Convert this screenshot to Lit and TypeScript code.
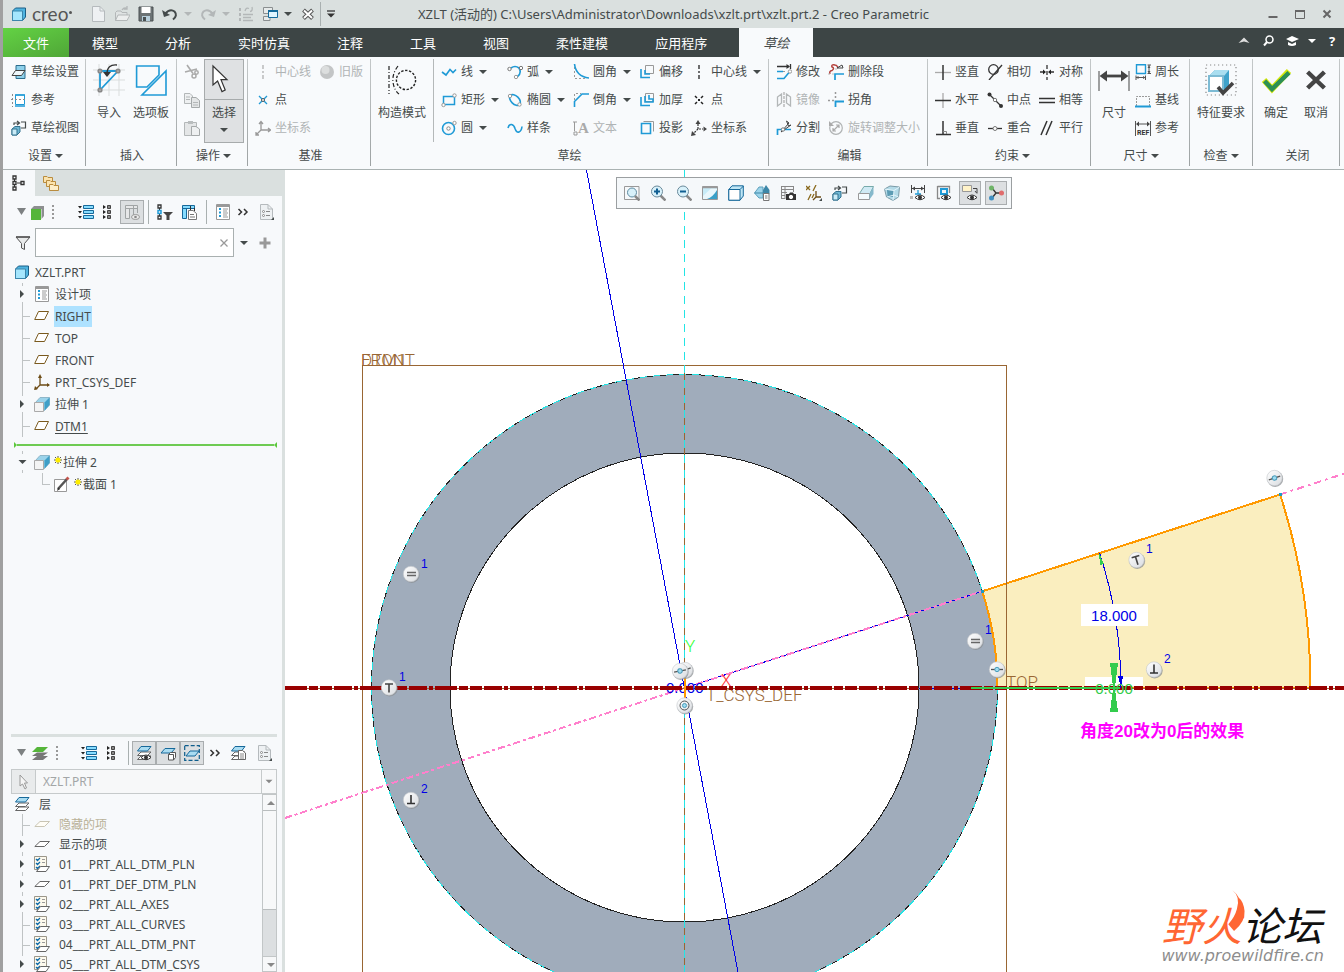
import { LitElement, html, svg, css, nothing } from "lit";
import { customElement, state } from "lit/decorators.js";

const B = "#1f9ad6";
const D = "#454b4b";
const G = "#b3b7b8";
const N = "#17699a";

const line = (d: string, c = D, w = 1, dash = "") =>
  svg`<path d=${d} fill="none" stroke=${c} stroke-width=${w} stroke-dasharray=${dash || "none"}/>`;
const fill = (d: string, c = D, s = "none") => svg`<path d=${d} fill=${c} stroke=${s}/>`;
const node = (x: number, y: number, c = "#777", r = 1.7) =>
  svg`<circle cx=${x} cy=${y} r=${r} fill="#fff" stroke=${c}/>`;

const plane = (c: string, f = "#fff") => fill("M4.500 3.500H14.500L10.500 11.500H.7z", f, c);
const flat = (c: string, f = "#fff") => fill("M6 5.500H15.500L10.500 10.500H.8z", f, c);
const extrude = svg`${fill("M1.500 6.500L6 1.500H15.500V9L10.500 14.500z", "#9bd3ea", "#8fb7c9")}
  ${fill("M10.500 6.500L15.500 1.500V9L10.500 14.500z", "#3f9fc7")}${fill("M.5 6.500H9.500V15.500H.5z", "#f4f4f4", "#aaa")}`;
const partCube = svg`${fill("M1.500 5L4.500 2H14.500V11L11.500 14.500H1.500z", "#4fb4e0", "#1b5f86")}
  ${fill("M1.500 5H11.500V14.500H1.500z", "#a5e6fd", "#3c86ac")}`;
const page = svg`${fill("M2.500 .5H10L14.500 5V15.500H2.500z", "#eef1f3", "#b5babd")}${line("M10 .5V5H14.500", "#b5babd")}`;
const detailPage = svg`${page}${node(5.500, 7.500, "#888", 1)}${node(5.500, 11.500, "#888", 1)}${line("M8 7.500H12M8 11.500H12", "#888")}${fill("M16 13V16H13z")}`;
const listBars = svg`${fill("M5.500 1.500H15.500V4.500H5.500zM5.500 6.500H15.500V9.500H5.500zM5.500 11.500H15.500V14.500H5.500z", "#86dcff", N)}
  ${fill("M0 2H4L2 4.500zM0 7H4L2 9.500zM0 12H4L2 14.500z", "#222")}`;
const smallBars = svg`${fill("M8.500 1.500H11.500V4.500H8.500zM8.500 6.500H11.500V9.500H8.500zM8.500 11.500H11.500V14.500H8.500z", "#888", "#444")}
  ${fill("M4 1L7 3L4 5zM4 6L7 8L4 10zM4 11L7 13L4 15z", "#222")}`;
const sheet = svg`${fill("M1.500 .5H14.500V15.500H1.500z", "#fff", "#999")}${line("M1 2H15", "#999", 2)}
  ${line("M4 5H6M4 8.500H6M4 12H6", B, 2)}${line("M8 5H13M8 7H12M8 9H13M8 11H12M8 13H13", "#999")}`;
const lens = svg`${line("M10.500 10.500L15.500 15.500", "#888", 2.5)}<circle cx="7" cy="6.500" r="5.500" fill="#d8f1fa" stroke="#6b8a9a"/>`;
const eye = svg`<path d="M5 12.500Q10 7.500 15 12.500Q10 17 5 12.500z" fill="#fff" stroke="#333"/><circle cx="10" cy="12.500" r="2" fill="#333"/>`;
const layers = (c1: string, c2: string) => svg`${fill("M1.500 14.500L5 11H15L11.500 14.500z", "#fff", c2)}
  ${fill("M1.500 10.500L5 7H15L11.500 10.500z", "#fff", c2)}${fill("M1.500 6L5 1.500H15L11.500 6z", c1, N)}`;
const checkSheet = svg`${fill("M.5 .5H12.500V13.500H.5z", "#fdf9ec", "#9a968a")}${line("M2 3L3.500 4.500L6 2M2 7L3.500 8.500L6 6M2 11L3.500 12.500L6 10", "#0d6aa8", 1.300)}
  ${line("M8 3.500H11M8 6.500H11", "#999")}${fill("M6.500 10.500H15.500L12 15.500H2.500z", "#fff", "#666")}`;
const caretGlyph = svg`${fill("M4 6H12L8 10z")}`;
const camSwap = svg`${fill("M1 9L4 6.500H9V12L6 15H1z", "#6fb7d4", "#33728f")}${fill("M1 9H6V15H1z", "#c9ebf7", "#33728f")}
  ${line("M3 5V3H8M6 1L8.500 3L6 5M10 2H14.500V8H10", D, 1.200)}`;

const ICONS: Record<string, unknown> = {
  app: partCube,
  partCube,
  new: page,
  open: svg`${fill("M1.500 14.500V6.500L3 5H7L8 6.500H13V14.500z", "#dfe3e3", G)}${fill("M4 9H16L13 14.500H1.500z", "#eceeee", G)}${line("M8 4Q10 1 13 2.500M13 0V3H10", G, 1.300)}`,
  save: svg`${fill("M1 1H15V15H1z", "#6c7375", "#4a5052")}${fill("M3.500 1H12.500V7H3.500z", "#fff")}${fill("M4 10H12V15H4z", "#b7cfdc")}${fill("M5 11H8V15H5z", "#4a5052")}`,
  undo: svg`${line("M3 8Q8 2 12.500 5.500Q16 9.500 11 13.500", D, 2)}${fill("M0 4L2 11L8 9z")}`,
  redo: svg`${line("M13 8Q8 2 3.500 5.500Q0 9.500 5 13.500", G, 2)}${fill("M16 4L14 11L8 9z", G)}`,
  regen: svg`${line("M1 3.500H3M1 8.500H3M1 13.500H3", G, 3)}${line("M5 8.500H15M5 11.500H13M5 14.500H15M7 5Q8 1 11 2.500M14 1Q15 5 12 5.500", G, 1.300)}`,
  windows: svg`${fill("M1.500 1.500H10.500V7.500H1.500z", "#e6eaea", "#8a8f90")}${fill("M1.500 10.500H8V14.500H1.500z", "#e6eaea", "#8a8f90")}${fill("M6.500 4.500H15.500V11.500H6.500z", "#dff5ff", "#136a9b")}${line("M6 5H16", "#136a9b", 2)}`,
  closeDoc: svg`${line("M3.500 4L12.500 12.500M12.500 4L3.500 12.500", "#555", 4)}${line("M4 4.500L12 12M12 4.500L4 12", "#fff", 2)}`,
  caret: caretGlyph,
  caretLight: svg`${fill("M4 6H12L8 10z", G)}`,
  caretBar: svg`${line("M4 5H12", "#333", 1.300)}${fill("M4 7.500H12L8 11.500z", "#333")}`,
  setup: svg`${fill("M5 1.500H14V14.500H5z", "#8ed0ea", "#2d6d8d")}${fill("M1 11.500L4.500 6.500H14L10.500 11.500z", "#eef7fb", "#444")}`,
  refs: svg`${fill("M4.500 3H13.500V12.500H4.500z", "#fff", B)}${line("M4 3H14M4 14H14", B, 1.600)}${line("M1.500 2V15M0 7.500H16", "#8a8a8a", 1, "2 2")}`,
  sketchView: camSwap,
  import: svg`${line("M3 0V16M8 0V16M13 0V16M0 3H16M0 8H16M0 13H16", "#dadddd", .5)}${line("M3.500 3.500V13L12.500 3.500z", B, .9)}${node(3.500, 3.500, "#888", .8)}${node(12.500, 3.500, "#888", .8)}${node(3.500, 13, "#888", .8)}${line("M12 .5Q7 0 7 5", "#333", .7)}${fill("M5 4H9L7 6.500z", "#333")}`,
  palette: svg`${line("M.8 1H12V5.500L6 11.500H.8z", B, .8)}${line("M15.500 3.500V15.500H3.500z", B, .8)}`,
  cut: svg`${line("M3 1L9 9.500M13 5L1 8", "#aaa", 1.600)}<circle cx="10" cy="12" r="2" fill="none" stroke="#aaa" stroke-width="1.500"/><circle cx="12.500" cy="8.500" r="1.700" fill="none" stroke="#aaa" stroke-width="1.500"/>`,
  copy: svg`${fill("M.5 1.500H6L8.500 4V11.500H.5z", "#eef0f1", G)}${fill("M7.500 5.500H12L15.500 8.500V15.500H7.500z", "#e4e6e7", "#a5a9aa")}${line("M2 5H6M2 7.500H6M9 10.500H14M9 13H14", G)}`,
  paste: svg`${fill("M.5 2.500H12.500V15.500H.5z", "#e4e6e7", G)}${fill("M4 1H9V4H4z", "#b9bdbe")}${fill("M7.500 6.500H12L15.500 9V15.500H7.500z", "#eef0f1", "#a5a9aa")}`,
  select: svg`<path d="M2.500 1V10.500L4.800 8.500L7 13.800L8.600 13L6.500 7.800H9.500z" fill="#fff" stroke="#333" stroke-width=".6"/>`,
  clineGrey: line("M8 1V15", "#999", 1, "4 2 2 2"),
  sphere: svg`<circle cx="8" cy="8" r="7" fill="#c3c5c6"/><circle cx="6.500" cy="6" r="4" fill="#dcdede"/>`,
  pointBlue: svg`${line("M4 4L12 12M12 4L4 12", B, 1.300)}<circle cx="8" cy="8" r="1.500" fill="#fff" stroke="#555"/>`,
  csysGrey: svg`${line("M6 2V10H15M6 10L1 15M4 4L6 1.500L8 4M13 8L15.500 10L13 12M1 12V15H4", "#999", 1.300)}`,
  construct: svg`${line("M1.500 1V15", "#222", .6, "2 1 .5 1")}${line("M6 1Q3 5 3.500 9Q4 13 6.500 15", "#222", .6, "2 1 .5 1")}<circle cx="10" cy="8" r="4.800" fill="none" stroke="#222" stroke-width=".7" stroke-dasharray="1.200 .8"/>`,
  line: line("M1 8L5 11L9 5.500L12 8.500L15 5.500", B, 1.600),
  rect: svg`${line("M2.500 4.500H13.500V12.500H2.500z", B, 1.500)}${node(13.500, 3.500, "#999")}${node(2.500, 13, "#999")}`,
  circle: svg`<circle cx="7.500" cy="8.500" r="6" fill="none" stroke=${B} stroke-width="1.600"/>${node(7.500, 8.500, "#888")}${node(13.500, 3, "#999")}`,
  arc: svg`${line("M4 4Q8 1 12 4Q15 9 10.500 12.500", B, 1.600)}${node(2.500, 5)}${node(14, 4)}${node(9, 13, "#999")}`,
  ellipse: svg`<ellipse cx="8" cy="8" rx="6.500" ry="4" transform="rotate(45 8 8)" fill="none" stroke=${B} stroke-width="1.600"/>${node(3, 4, "#999")}${node(12.500, 12.500, "#999")}`,
  spline: line("M1 8Q2 4 4.500 4.500Q7 5 8 8.500Q9.500 13 12 12Q14.500 11 15 6.500", B, 1.600),
  fillet: svg`${line("M1.500 3V14.500H14", "#999", 1, "2 2")}${line("M1.500 0Q3 12.500 16 14", B, 1.600)}`,
  chamfer: svg`${line("M1.500 8V1.500H8", "#999", 1, "2 2")}${line("M1.500 15V9.500L9 2H16", B, 1.600)}`,
  textGrey: svg`${line("M1.500 2V11M0 2H4", "#999")}<text x="5" y="13" font-family="Liberation Serif" font-weight="bold" font-size="15" fill="#aaa">A</text>${line("M1 12H4V15H1z", "#999")}`,
  offset: svg`${line("M6.500 1.500H14.500V9.500H6.500z", "#999")}${line("M2 5V13.500H11M6 6V10H11", B, 1.600)}`,
  thicken: svg`${line("M6.500 1.500H14.500V9.500H6.500z", "#999")}${line("M2 5V13.500H11M6 4V10H14V7H10V3", B, 1.600)}`,
  project: svg`${line("M4.500 1.500H14.500V11.500", "#999")}${line("M2.500 3.500H11.500V13.500H2.500z", B, 1.600)}`,
  clineBlack: line("M8 1V15", "#222", 1.300, "4 2 2 2"),
  pointBlack: svg`${line("M4 4L6 6M10 10L12 12M12 4L10 6M6 10L4 12", "#222", 1.500)}${fill("M7 7H9V9H7z", "#222")}`,
  csysBlack: svg`${line("M7 4V9H12M7 9L2 14", "#333", 1.200, "2 1")}${fill("M7 0L9.500 4H4.500zM16 9L12.500 6.500V11.500zM0 16L1 11L5 15z", "#444")}`,
  modify: svg`${line("M1 2.500H13M14.500 0V5", "#333", 1.300)}${fill("M10.500 0L14 2.500L10.500 5z", "#333")}${line("M1 7.500H9", "#999", 1, "2 1")}${line("M1 7.500H7M1 14.500H8L13 8.500", B, 1.600)}${node(14, 7.500, "#999")}`,
  mirror: svg`${line("M8 0V16", "#999", 1, "3 1")}${line("M1.500 5L5.500 2V11L1.500 14zM14.500 5L10.500 2V11L14.500 14z", G, 1.300)}`,
  divide: svg`${line("M1.500 15V9.500H15", B, 1.700)}${line("M5 12L13 3L10.500 1L12.500 6L15 5z", "#444")}${node(7, 9.500)}`,
  deleteSeg: svg`${line("M2 10Q1 7 4 6.500Q7 4 4 3Q3 0 7 1Q9 1 10 4", "#b5413c", 1.500)}${line("M0 10H6M8 4V8", "#bbb", 1, "2 2")}${line("M7 16V10H16", B, 1.700)}${line("M9 4L14 1L15 4z", "#444")}`,
  corner: svg`${line("M0 8.500H7M7.500 0V8", "#999", 1.500, "2 2")}${line("M7.500 15V9.500H16", B, 1.800)}`,
  rotate: svg`<circle cx="8" cy="8" r="6.300" fill="none" stroke="#b0b3b4" stroke-width="1.200"/>${line("M5 11L11 5M8 5H11V8M5 8V11H8", "#aaa", 1.200)}${fill("M1 1V6H6z", "#aaa")}`,
  vertical: svg`${line("M0 8.500H16", "#aaa", 1.300)}${line("M8 1V16", "#333", 1.500)}`,
  horizontal: svg`${line("M8 1V16", "#aaa", 1.300)}${line("M0 8.500H16", "#333", 1.500)}`,
  perp: svg`${line("M8 1V14M1 14.500H16", "#333", 1.500)}${line("M8 11.500H11.500V14", "#888")}`,
  tangent: svg`<circle cx="6.500" cy="5.500" r="4.800" fill="none" stroke="#333" stroke-width="1.300"/>${line("M2 16L15 1", "#333", 1.300)}`,
  midpoint: svg`${line("M2 2L14 14", "#333", 1.300)}<circle cx="2.500" cy="2.500" r="2" fill="#333"/><circle cx="14" cy="14" r="2" fill="#333"/>${node(8, 8)}`,
  coincident: svg`${line("M1 8.500H15", "#333", 1.300)}${node(8, 8.500, "#777", 2)}`,
  symmetric: svg`${line("M8 1V16", "#333", 1.300, "4 2")}${line("M1 8H6M15 8H10", "#333", 1.300)}${fill("M4 5.500L7 8L4 10.500zM12 5.500L9 8L12 10.500z", "#222")}`,
  equal: line("M0 6.500H16M0 10.500H16", "#333", 1.500),
  parallel: line("M2 15L8 1M7 15L13 1", "#333", 1.500),
  dimension: svg`${line("M.5 3.500V13.500M15.500 3.500V13.500", "#444", .5)}${line("M3 6H13", "#444", 1.400)}${fill("M.8 6L4.500 3.200V8.800zM15.200 6L11.500 3.200V8.800z", "#444")}`,
  perimeter: svg`${line("M1.500 .8H10.500V9.500H1.500z", B, 1.400)}${line("M14 1V9M12.500 1H16M12.500 9.500H16M1 13.500H10M1 11.500V16M10.500 11.500V16", "#555")}${fill("M12.500 4L14 1.500L15.500 4zM12.500 7L14 9.500L15.500 7zM3.500 12V15L1 13.500zM8 12V15L10.500 13.500z", "#555")}`,
  baseline: svg`${line("M1.500 14V4.500H14.500V14", "#999", 1, "2 1")}${line("M0 14.500H16", B, 2)}`,
  ref: svg`${line("M.5 1V16M15.500 1V16M2 4H14", "#555")}${fill("M1 4L4 1.500V6.500zM15 4L12 1.500V6.500z", "#444")}<text x="2" y="15" font-family="Roboto" font-weight="bold" font-size="7" fill="#333">REF</text>`,
  feature: svg`<rect x=".5" y=".5" width="15" height="15" fill="none" stroke="#888" stroke-width=".6" stroke-dasharray=".6 1.400"/>${fill("M2 6L5 3H12V11L9 14H2z", "#3fa3cb")}${fill("M2 6L5 3H12L9.500 6z", "#a9def0")}${fill("M2 6H9V13.500H2z", "#fff", "#7dbbd4")}${line("M6.500 11.500L9 14.500L14 9.500", "#444", 1.800)}`,
  ok: svg`${line("M2 8L6 12.500L14.500 3.500", "#d5e80c", 3)}${line("M2.300 8.500L6 12.500L14.500 4.300", "#2c8f55", 2.200)}`,
  cancel: line("M3.800 4L12.200 12M12.200 4L3.800 12", "#444", 2.2),
  tree: svg`${line("M3.500 4V6M3.500 10V12M6 8H10", "#333")}${line("M2 1H5V4H2zM2 6.500H5V9.500H2zM2 12H5V15H2zM10 6.500H13V9.500H10z", "#333", 1.300)}`,
  folders: svg`${fill("M.5 1.500H4L5 2.500H9.500V7.500H.5z", "#fbe3ae", "#b98c3f")}${fill("M3.500 5.500H7L8 6.500H12.500V11.500H3.500z", "#fbe3ae", "#b98c3f")}${fill("M6.500 9.500H10L11 10.500H15.500V15.500H6.500z", "#fdeec9", "#b98c3f")}`,
  bigCaret: fill("M3 4H12L7.500 11z", "#7d8182"),
  greenCube: svg`${fill("M1 5L4 2H14V12L11.500 15V5z", "#8d8f90")}${fill("M1 5H11V16H1z", "#55b53a")}`,
  greenLayers: svg`${fill("M0 15L5 11H16L11 15z", "#777")}${fill("M0 11L5 7.500H16L11 11z", "#777")}${fill("M0 7L5 2H16L11 7z", "#55b53a")}`,
  dots: line("M7 1V15", "#999", 2, "2 2"),
  listBars,
  smallBars,
  colsEye: svg`${fill("M1.500 1.500H13.500V4.500H1.500zM1.500 4.500H5.500V14.500H1.500z", "#e6e7e8", "#a0a4a5")}${line("M9.500 1.500V11M13.500 4V9", "#a0a4a5")}<ellipse cx="11.500" cy="13" rx="4" ry="2.500" fill="#eee" stroke="#999"/><circle cx="11.500" cy="13" r="1.300" fill="#888"/>`,
  treeFilter: svg`${line("M2.500 4V6M2.500 10V12", "#333")}${line("M1 1H4V4H1zM1 12H4V15H1z", "#333", 1.300)}${line("M1 6.500H4V9.500H1z", B, 1.500)}${fill("M6 8H16L12.500 11.500V16H9.500V11.500z", "#444")}`,
  cols: svg`${fill("M.5 1.500H12.500V4.500H.5zM.5 4.500H4.500V14.500H.5z", "#86dcff", N)}${line("M8.500 2V7M12.500 4V7", "#333")}${fill("M6.500 6.500H11L14.500 9.500V15.500H6.500z", "#fff", "#777")}${line("M8 10.500H12M8 13H13", "#777")}`,
  sheet,
  chevrons: line("M2.500 5L5.500 8L2.500 11M8 5L11 8L8 11", "#333", 1.500),
  detailPage,
  funnel: svg`${fill("M1 2H15L9.500 8.500V14.500L6.500 13V8.500z", "#e8eaea", "#555")}${line("M1 2H15", "#555", 1.500)}`,
  cross: line("M4.500 4.500L11.500 11.500M11.500 4.500L4.500 11.500", "#999", 1.300),
  plus: line("M8 2.500V13.500M2.500 8H13.500", "#999", 3),
  datum: plane("#7a5a1e"),
  csys: svg`${line("M6 2V11H15M6 11L1.500 15.500", "#6d4c16", 1.300)}${fill("M4 4L6 0L8 4zM13 9L16 11L13 13zM0 16L1 12L4 15z", "#6d4c16")}`,
  extrude,
  sketch: svg`${fill("M.5 3.500H12.500V15.500H.5z", "#fff", "#999")}${line("M4 13L13 3", "#555", 2.500)}${line("M12.500 3.500L14.500 1.500", "#c4554d", 2.800)}${fill("M3 15L4 11.500L6 13z", "#333")}`,
  layer: layers("#a9dcf2", "#666"),
  layersEye: svg`${layers("#a9dcf2", "#666")}${eye}`,
  planeCube: svg`${fill("M1 8L5 3.500H15L11 8z", "#a9dcf2", N)}${fill("M8.500 9.500L10.500 7.500H15.500V12.500L13.500 15H8.500z", "#fff", "#555")}${line("M8.500 9.500H13.500V15", "#555")}`,
  planeDash: svg`${fill("M2 11L6 6H15L11 11z", "#a9dcf2", N)}${line("M.7 .7H15.300V15.300H.7z", "#0d5d8c", 1.200, "4 2")}`,
  layersDoc: svg`${layers("#a9dcf2", "#666")}${fill("M8.500 5.500H12.500L15.500 8V14.500H8.500z", "#fff", "#666")}${line("M10 9H14M10 11H14M10 13H14", "#888")}`,
  cursorGrey: fill("M4 1V12L6.500 10L9 15L10.500 14L8.500 9H11.500z", "#f5f5f5", "#999"),
  planeGrey: flat("#666"),
  planeFaint: flat("#c9c5b4", "#fffdf6"),
  checkSheet,
  zoomFit: svg`${line("M.5 1.500H15V14.500H.5z", "#999")}<circle cx="8" cy="7.500" r="4.500" fill="#d8f1fa" stroke="#5d8aa0"/>${line("M11 11L15.500 15.500", "#888", 2.500)}`,
  zoomIn: svg`${lens}${line("M7 3.500V9.500M4 6.500H10", "#115f92", 2)}`,
  zoomOut: svg`${lens}${line("M4 6.500H10", "#115f92", 2)}`,
  repaint: svg`${fill("M.5 1.500H15.500V14.500H.5z", "#c8ecf8", "#999")}${fill("M1 14V11L9 3.500H15V14z", "#e9f7fc")}${fill("M5 14Q11 12 15 5V14z", "#3aa0c8")}${line("M.5 2.500H15.500", "#999", 1.500)}`,
  shade: svg`${fill("M.8 4.500L4 .8H15.300V11L12 15.200H.8z", "#bfe6f5", N)}${fill("M.8 4.500H12V15.200H.8z", "#fff", N)}${line("M12 4.500L15.500 1", N)}`,
  saved: svg`${fill("M.5 8L5 2H9V13H5z", "#9cd4ea", "#5fa0bb")}${line("M.5 8H9", "#3d87a8")}${fill("M9 5L12 0L15.500 5V9H9z", "#3d87a8")}${fill("M9.500 8.500H15V15.500H9.500z", "#fff", "#777")}${line("M11 11H13.500M11 13H13.500", "#777")}`,
  camera: svg`${line("M1 1.500H13.500M1 4.500H13.500M1 7.500H7M1 10.500H5M1 13.500H5M1.500 1V14M5 1V14M13.500 1V7", "#888")}${fill("M6 9H9L10 7.500H13L14 9H16V15H6z", "#333")}${node(11, 12, "#fff", 1.700)}`,
  datumShow: svg`${line("M0 1L4 5M4 1L0 5M10 0L7 6M5 9L2 15M8 9L6 13", "#8a6a1e", 1.300)}${line("M10 6V12H15M10 12L7 15", "#6d4c16", 1.300)}${fill("M16 13V16H13z")}`,
  camSwap,
  section: svg`${fill("M1.500 8.500L6 1.500H15.500L12 8.500z", "#cfeaf4", "#7aa")}${fill("M.5 8.500H11.500V14.500H.5z", "#f4fbfd", "#999")}${fill("M11.500 8.500L15.500 2V9L11.500 14.500z", "#85b9cc")}`,
  persp: svg`${fill("M.5 4L6 1L15.500 2L14.500 12L9 15.500L2.500 12z", "#b4dbe8", "#7a9aa6")}${fill("M3 5L10 5.500V12L3.500 12z", "#5c9cb4")}${line("M.5 4L10 5.500L15.500 2M10 5.500L9 15.500M3 12L10 10L14.500 12", "#e3f4fa")}`,
  dimEye: svg`${line("M1.500 0V8M14.500 0V8M2 3.500H14", "#444")}${fill("M2 3.500L5 1.500V5.500zM14 3.500L11 1.500V5.500z", "#444")}${line("M5 9H11M8 5V9", B, 1.300)}${eye}${fill("M0 11H3V14H0z", "#bbb")}`,
  sketchEye: svg`${line("M1.500 1.500H13.500V8M1.500 1V13.500H4", "#888", 1.300)}${line("M5 4H11V9H5z", B, 2)}${eye}`,
  noteEye: svg`${fill("M.5 .5H9.500V6.500H.5z", "#fff3c9", "#999")}${line("M11 3.500H15V8M13 6L15 8.500", "#444")}${eye}`,
  spin: svg`${line("M4 3L8 8L14 8M8 8L4 13", "#333", 1.300)}<circle cx="3.500" cy="3" r="2.500" fill="#6fb468"/><circle cx="13.500" cy="8" r="2.500" fill="#e06d6d"/><circle cx="3.500" cy="13" r="2.500" fill="#3f8fc1"/>`,
  up: fill("M2.500 10L8 4.500L13.500 10L8 8.500z", "#ddd"),
  search: svg`<circle cx="9.500" cy="6.500" r="3.500" fill="none" stroke="#fff" stroke-width="1.500"/>${line("M7 9L4 12.500", "#fff", 2)}`,
  hat: svg`${fill("M2 6L8 3L15 6L8 9zM4 9V12Q8 14 12 12V9L8 11z", "#fff")}`,
  caretWhite: fill("M4 6H12L8 10z", "#fff"),
  min: line("M3.500 11H12.500", "#666", 2),
  max: svg`${line("M3.500 4.500H12.500V12.500H3.500z", "#666", 1)}${line("M3 5H13", "#666", 2)}`,
  closeWin: line("M4.500 4.500L11.500 11.500M11.500 4.500L4.500 11.500", "#666", 2),
  arrowUp: fill("M4 10L8 6L12 10z", "#888"),
  arrowDown: fill("M4 6H12L8 10z", "#888"),
  tri: fill("M6 4V12L10 8z"),
  triDown: fill("M4.500 6H12.500L8.500 10z"),
};

const icon = (name: string, cls = "") =>
  html`<svg class="icon ${cls}" viewBox="0 0 16 16" aria-hidden="true">${ICONS[name]}</svg>`;
const drop = html`<svg class="drop" viewBox="0 0 8 4" aria-hidden="true"><path d="M0 0H8L4 4z" fill="#454b4b"/></svg>`;

type Cmd = [icon: string, label: string, flags?: string];

@customElement("app-root")
export class AppRoot extends LitElement {
  @state() private activeTab = "草绘";

  static styles = css`
    :host {
      display: flex;
      flex-direction: column;
      height: 100vh;
      box-sizing: border-box;
      overflow: hidden;
      border-left: 3px solid #a0a0a0;
      background: #f8fafc;
      color: #454b4b;
      font: 12px/20px "Noto Sans", "Noto Sans CJK SC", sans-serif;
    }
    * { box-sizing: border-box; }
    button {
      font: inherit;
      color: inherit;
      background: none;
      border: 0;
      padding: 0;
      margin: 0;
      white-space: nowrap;
    }
    .icon { width: 16px; height: 16px; flex: none; display: block; }
    .big { width: 32px; height: 32px; }
    .drop { width: 8px; height: 4px; flex: none; }

    .title {
      display: grid;
      grid-template-columns: 1fr auto 1fr;
      align-items: center;
      height: 28px;
      flex: none;
      background: #dae0df;
    }
    .quick { display: flex; align-items: center; gap: 8px; padding-left: 8px; }
    .brand { display: flex; align-items: center; gap: 5px; width: 71px; font: 19px/24px Lato, sans-serif; color: #555; }
    .reg { width: 3px; height: 3px; border-radius: 50%; background: #555; margin: 0 0 4px -4px; }
    .narrow { width: 8px; overflow: hidden; }
    .narrow .icon { margin-left: -4px; }
    .quick .narrow { margin-left: -2px; }
    .quick .rule { width: 1px; height: 24px; margin-left: -4px; background: #a9b0b0; }
    .caption { font-size: 13px; font-weight: 400; margin: 0; }
    .winbtns { display: flex; justify-content: flex-end; gap: 11px; padding-right: 9px; }

    .tabs { display: flex; height: 29px; flex: none; background: #3d4545; color: #fff; font-size: 13px; }
    .tabs nav { display: flex; gap: 1px; flex: 1; }
    .tab { padding: 0 23px; }
    .file { padding: 0 20px; margin-right: -1px; background: linear-gradient(160deg, #63d244, #4fa637); }
    .tab.on { margin-left: 8px; padding: 0 24px; background: #f8fafc; color: #454b4b; font-style: italic; }
    .tools { display: flex; align-items: center; gap: 8px; padding-right: 4px; height: 26px; font-weight: 700; }
    .tools button { width: 16px; }
    .tools .narrow { width: 8px; }

    .ribbon { display: flex; height: 113px; flex: none; border-bottom: 1px solid #aab2b2; }
    .group {
      display: grid;
      grid-template-rows: 85px 27px;
      padding-right: 1px;
      background: linear-gradient(#c4c8c9, #9da2a3) right 2px / 1px 107px no-repeat;
    }
    .group h2 { margin: 0; font: inherit; line-height: 27px; display: flex; justify-content: center; align-items: center; gap: 3px; }
    .body { display: flex; padding-top: 1px; }
    .g-setup { width: 83px; padding-left: 8px; }
    .g-setup h2 { margin-left: -5px; }
    .g-insert { width: 91px; padding-left: 2px; }
    .g-op { width: 71px; padding-left: 7px; }
    .g-op h2, .g-datum h2, .g-edit h2 { margin-left: -4px; }
    .g-datum { width: 123px; padding-left: 7px; }
    .g-sketch { width: 398px; }
    .g-edit { width: 159px; padding-left: 7px; }
    .g-cons { width: 163px; padding-left: 7px; }
    .g-dim { width: 99px; padding-left: 2px; }
    .g-check { width: 63px; }
    .g-close { width: 87px; padding-left: 3px; }
    .col { display: grid; grid-template-rows: repeat(3, 28px); align-content: start; }
    .cmd { display: flex; align-items: center; gap: 4px; text-align: left; }
    .cmd .drop { margin-left: 2px; }
    .off { color: #b0b4b5; }
    .c52 { width: 52px; }
    .c64 { width: 64px; }
    .c66 { width: 66px; }
    .large { display: flex; flex-direction: column; align-items: center; gap: 7px; padding-top: 6px; width: 42px; height: 84px; }
    .large.wide { width: 62px; }
    .large.mid { width: 40px; }
    .inner { width: 1px; margin: 1px 7px 0 0; background: #b4b8b9; height: 83px; }
    .opicons { width: 20px; align-items: center; }
    .opicons button { height: 16px; }
    .pick { width: 40px; height: 84px; margin: 1px 0 0; border: 1px solid #a7abac; background: #dfe1e3; display: grid; grid-template-rows: 40px 26px 8px; justify-items: center; align-items: center; }
    .pick .top { border-bottom: 1px solid #a7abac; width: 100%; height: 40px; display: grid; place-items: center; }

    .main { display: flex; flex: 1; min-height: 0; }
    .side { width: 282px; flex: none; display: flex; flex-direction: column; border-right: 3px solid #dae0df; background: #f7f9fb; }
    .sidetabs { display: flex; height: 26px; flex: none; background: #dae0df; margin-right: -3px; }
    .sidetabs button { width: 31px; display: grid; place-items: center; }
    .sidetabs .sel { background: #f7f9fb; width: 32px; }
    .bar { display: flex; align-items: center; height: 32px; flex: none; padding-left: 11px; }
    .bar > * { display: grid; place-items: center; flex: none; height: 24px; }
    .w8 { width: 8px; }
    .w16 { width: 16px; }
    .w18 { width: 18px; }
    .w20 { width: 20px; }
    .w24 { width: 24px; }
    .w26 { width: 26px; }
    .w28 { width: 28px; }
    .bar .lead { justify-items: start; }
    .bar .sep { background: linear-gradient(#a9b0b0, #a9b0b0) center / 1px 24px no-repeat; }
    .gap { margin-left: 4px; }
    .pressed { background: #dcdfe1; border: 1px solid #a9adaf; }
    .filter { display: grid; grid-template-columns: 24px 199px 20px 22px; align-items: center; padding-left: 8px; height: 29px; flex: none; }
    .filter > * { display: grid; place-items: center; }
    .field { position: relative; height: 29px; }
    .field input { width: 100%; height: 29px; border: 1px solid #a9b0b0; background: #fff; padding: 0 24px 0 6px; font: inherit; }
    .field button { position: absolute; right: 2px; top: 7px; }
    ul { list-style: none; margin: 0; padding: 0; }
    .model { flex: 1; padding: 4px 0 0 11px; min-height: 0; overflow: hidden; }
    .row { display: flex; align-items: center; height: 22px; font-size: 12px; white-space: nowrap; }
    .twig { width: 16px; height: 100%; flex: none; display: grid; place-items: center; background: linear-gradient(#bfc3c4, #bfc3c4) 8px 0 / 1px 100% no-repeat; }
    .leaf { background: linear-gradient(#bfc3c4, #bfc3c4) 8px 0 / 1px 100% no-repeat, linear-gradient(#bfc3c4, #bfc3c4) 8px 11px / 8px 1px no-repeat; }
    .twig .icon { background: #f7f9fb; }
    .row > .icon { margin: 0 4px; }
    .row .name { padding: 0 1px; line-height: 21px; }
    .row.root > .icon { margin: 0 4px 0 0; }
    .marked { background: #aee2ff; }
    .under { text-decoration: underline; text-underline-offset: 2px; }
    .star { width: 8px; height: 8px; margin-bottom: 5px; flex: none; display: block; }
    .child { padding-left: 20px; }
    .elbow { width: 8px; height: 12px; margin: 0 0 10px 8px; border: solid #bfc3c4; border-width: 0 0 1px 1px; }
    .insert { height: 14px; display: flex; align-items: center; margin-right: 5px; padding-top: 2px; }
    .insert::before, .insert::after { content: ""; border: solid transparent; border-width: 3px 0; }
    .insert::before { border-left: 3px solid #5cc83c; }
    .insert::after { border-right: 3px solid #5cc83c; }
    .insert span { flex: 1; height: 2px; background: #6ecb52; }
    .lower { flex: 0 0 238px; display: flex; flex-direction: column; min-height: 0; }
    .split { height: 3px; margin: 0 5px 0 8px; background: #dae0df; flex: none; }
    .combo { display: flex; height: 25px; flex: none; margin: 0 5px 0 8px; border: 1px solid #c6cacb; }
    .combo button { width: 24px; background: #e9ebec; border-right: 1px solid #c6cacb; display: grid; place-items: center; }
    .combo .pickbox { flex: 1; display: flex; }
    .combo select { appearance: none; border: 0; background: #f7f8f9; flex: 1; font: inherit; color: #a3a6a7; padding: 0 7px; opacity: 1; border-radius: 0; }
    .combo .icon { align-self: center; }
    .combo .arrow { border-left: 1px solid #c6cacb; width: 15px; height: 23px; background: #f7f8f9; }
    .layerbox { display: flex; flex: 1; min-height: 0; margin-right: 5px; }
    .layerlist { flex: 1; padding-left: 11px; overflow: hidden; }
    .layerlist .row { height: 20px; }
    .layerlist .name { padding: 0 5px; line-height: 19px; }
    .faint { color: #b9b198; }
    .scroll { width: 15px; display: flex; flex-direction: column; background: #dcdfe1; border: 1px solid #c2c6c7; }
    .scroll .end { height: 15px; flex: none; background: #f7f8f9; display: grid; place-items: center; overflow: hidden; }
    .scroll .thumb { height: 100px; background: #f7f8f9; border: solid #b9bdbe; border-width: 1px 0; }
    .scroll .end:last-child { margin-top: auto; border-top: 1px solid #c2c6c7; }

    .canvas { flex: 1; min-width: 0; position: relative; background: #fff; overflow: hidden; }
    .scene { position: absolute; inset: 0; width: 100%; height: 100%; }
    .float { position: absolute; inset: 7px 0 auto 0; display: flex; justify-content: center; padding-right: 2px; pointer-events: none; }
    .floatbar { display: flex; gap: 4px; padding: 3px 4px; border: 1px solid #9b9fa1; background: #f5f8fa; pointer-events: auto; height: 32px; align-items: center; }
    .floatbar button { width: 22px; height: 24px; display: grid; place-items: center; }
    .stroke { font: 300 17px Roboto, "Liberation Sans", sans-serif; }
    .dim { font: 15px "Liberation Sans", Arial, sans-serif; }
    .idx { font: 12px "Liberation Sans", Arial, sans-serif; fill: #0000e6; }
    .note { font: 700 17px "Liberation Sans", "Noto Sans CJK SC", sans-serif; fill: #ff00ff; }
    .logo { position: absolute; right: 20px; bottom: 8px; display: flex; flex-direction: column; align-items: flex-end; }
    .word { font: italic 400 40px/48px "Noto Sans CJK SC", sans-serif; color: #111; white-space: nowrap; padding-right: 2px; }
    .fire { color: #ff6633; }
    .site { font: italic 16px/16px "DejaVu Sans", sans-serif; color: #8d8d8d; }
    .flame { position: absolute; left: 62px; top: -10px; width: 24px; height: 42px; }
  `;

  private cmd([ic, label, flags = ""]: Cmd) {
    return html`<button class="cmd ${flags.includes("off") ? "off" : ""}" ?disabled=${flags.includes("off")}>
      ${icon(ic)}<span>${label}</span>${flags.includes("drop") ? drop : nothing}
    </button>`;
  }
  private col(items: Cmd[], cls = "") {
    return html`<div class="col ${cls}">${items.map((i) => this.cmd(i))}</div>`;
  }
  private large(ic: string, label: string, cls = "") {
    return html`<button class="large ${cls}">${icon(ic, "big")}<span>${label}</span></button>`;
  }
  private group(cls: string, name: string, body: unknown, menu = false) {
    return html`<section class="group ${cls}"><div class="body">${body}</div><h2>${name}${menu ? drop : nothing}</h2></section>`;
  }
  private tool(name: string, cls: string, label = name) {
    return html`<button class=${cls} aria-label=${label}>${icon(name)}</button>`;
  }

  private titleBar() {
    const q = (n: string) => html`<button aria-label=${n}>${icon(n)}</button>`;
    const c = (n: string) => html`<button class="narrow" aria-label="menu">${icon(n)}</button>`;
    return html`<header class="title">
      <div class="quick">
        <span class="brand">${icon("app")}creo<span class="reg"></span></span>
        ${q("new")}${q("open")}${q("save")}${q("undo")}${c("caretLight")}${q("redo")}${c("caretLight")}
        ${q("regen")}${q("windows")}${c("caret")}${q("closeDoc")}<span class="rule"></span>${c("caretBar")}
      </div>
      <h1 class="caption">XZLT (活动的) C:\\Users\\Administrator\\Downloads\\xzlt.prt\\xzlt.prt.2 - Creo Parametric</h1>
      <div class="winbtns">${q("min")}${q("max")}${q("closeWin")}</div>
    </header>`;
  }

  private tabBar() {
    const names = ["模型", "分析", "实时仿真", "注释", "工具", "视图", "柔性建模", "应用程序", "草绘"];
    return html`<div class="tabs">
      <nav>
        <button class="file">文件</button>
        ${names.map((n) => html`<button class="tab ${n === this.activeTab ? "on" : ""}" @click=${() => (this.activeTab = n)}>${n}</button>`)}
      </nav>
      <div class="tools">
        <button aria-label="up">${icon("up")}</button><button aria-label="search">${icon("search")}</button>
        <button aria-label="learn">${icon("hat")}</button><button class="narrow" aria-label="menu">${icon("caretWhite")}</button>
        <button>?</button>
      </div>
    </div>`;
  }

  private ribbon() {
    return html`<div class="ribbon">
      ${this.group("g-setup", "设置", this.col([["setup", "草绘设置"], ["refs", "参考"], ["sketchView", "草绘视图"]]), true)}
      ${this.group("g-insert", "插入", html`${this.large("import", "导入")}${this.large("palette", "选项板")}`)}
      ${this.group("g-op", "操作", html`
        <div class="col opicons">${["cut", "copy", "paste"].map((n) => html`<button aria-label=${n} disabled>${icon(n)}</button>`)}</div>
        <button class="pick"><span class="top">${icon("select", "big")}</span><span>选择</span>${drop}</button>`, true)}
      ${this.group("g-datum", "基准", html`
        ${this.col([["clineGrey", "中心线", "off"], ["pointBlue", "点"], ["csysGrey", "坐标系", "off"]], "c64")}
        ${this.col([["sphere", "旧版", "off"]])}`)}
      ${this.group("g-sketch", "草绘", html`
        ${this.large("construct", "构造模式", "wide")}<span class="inner"></span>
        ${this.col([["line", "线", "drop"], ["rect", "矩形", "drop"], ["circle", "圆", "drop"]], "c66")}
        ${this.col([["arc", "弧", "drop"], ["ellipse", "椭圆", "drop"], ["spline", "样条"]], "c66")}
        ${this.col([["fillet", "圆角", "drop"], ["chamfer", "倒角", "drop"], ["textGrey", "文本", "off"]], "c66")}
        ${this.col([["offset", "偏移"], ["thicken", "加厚"], ["project", "投影"]], "c52")}
        ${this.col([["clineBlack", "中心线", "drop"], ["pointBlack", "点"], ["csysBlack", "坐标系"]])}`)}
      ${this.group("g-edit", "编辑", html`
        ${this.col([["modify", "修改"], ["mirror", "镜像", "off"], ["divide", "分割"]], "c52")}
        ${this.col([["deleteSeg", "删除段"], ["corner", "拐角"], ["rotate", "旋转调整大小", "off"]])}`)}
      ${this.group("g-cons", "约束", html`
        ${this.col([["vertical", "竖直"], ["horizontal", "水平"], ["perp", "垂直"]], "c52")}
        ${this.col([["tangent", "相切"], ["midpoint", "中点"], ["coincident", "重合"]], "c52")}
        ${this.col([["symmetric", "对称"], ["equal", "相等"], ["parallel", "平行"]])}`, true)}
      ${this.group("g-dim", "尺寸", html`
        ${this.large("dimension", "尺寸")}
        ${this.col([["perimeter", "周长"], ["baseline", "基线"], ["ref", "参考"]])}`, true)}
      ${this.group("g-check", "检查", this.large("feature", "特征要求", "wide"), true)}
      ${this.group("g-close", "关闭", html`${this.large("ok", "确定", "mid")}${this.large("cancel", "取消", "mid")}`)}
    </div>`;
  }

  private sidebar() {
    const star = html`<svg class="star" viewBox="0 0 8 8" aria-hidden="true">
      <path d="M4 0V8M0 4H8M1 1L7 7M7 1L1 7" stroke="#555" fill="none"/><circle cx="4" cy="4" r="2.600" fill="#ffee00"/></svg>`;
    const row = (twig: string, ic: string, name: string, cls = "", pre: unknown = nothing) => html`<li class="row">
      <span class="twig ${twig ? "" : "leaf"}">${twig ? icon(twig) : nothing}</span>${icon(ic)}${pre}<span class="name ${cls}">${name}</span></li>`;
    const layers: [string, string, string, string?][] = [
      ["", "planeFaint", "隐藏的项", "faint"],
      ["tri", "planeGrey", "显示的项"],
      ["tri", "checkSheet", "01___PRT_ALL_DTM_PLN"],
      ["tri", "planeGrey", "01___PRT_DEF_DTM_PLN"],
      ["tri", "checkSheet", "02___PRT_ALL_AXES"],
      ["", "checkSheet", "03___PRT_ALL_CURVES"],
      ["", "checkSheet", "04___PRT_ALL_DTM_PNT"],
      ["tri", "checkSheet", "05___PRT_ALL_DTM_CSYS"],
    ];
    return html`<aside class="side">
      <div class="sidetabs">
        <button class="sel" aria-label="model tree">${icon("tree")}</button><button aria-label="folders">${icon("folders")}</button>
      </div>
      <div class="bar">
        ${this.tool("bigCaret", "w16")}${this.tool("greenCube", "w16")}<span class="w28 lead">${icon("dots")}</span>
        ${this.tool("listBars", "w24")}${this.tool("smallBars", "w18")}${this.tool("colsEye", "w24 gap pressed")}
        <span class="w8 sep"></span>${this.tool("treeFilter", "w26")}${this.tool("cols", "w24")}
        <span class="w8 sep"></span>${this.tool("sheet", "w26")}${this.tool("chevrons", "w16")}${this.tool("detailPage", "w28")}
      </div>
      <div class="filter">
        <span>${icon("funnel")}</span>
        <div class="field"><input type="text" aria-label="filter" /><button aria-label="clear">${icon("cross")}</button></div>
        <button aria-label="filter menu">${icon("caret")}</button><button aria-label="add">${icon("plus")}</button>
      </div>
      <div class="model">
        <ul>
          <li class="row root">${icon("partCube")}<span class="name">XZLT.PRT</span></li>
          ${row("tri", "sheet", "设计项")}${row("", "datum", "RIGHT", "marked")}${row("", "datum", "TOP")}
          ${row("", "datum", "FRONT")}${row("", "csys", "PRT_CSYS_DEF")}${row("tri", "extrude", "拉伸 1")}
          ${row("", "datum", "DTM1", "under")}
          <li class="insert"><span></span></li>
          ${row("triDown", "extrude", "拉伸 2", "", star)}
          <li class="row child"><span class="elbow"></span>${icon("sketch")}${star}<span class="name">截面 1</span></li>
        </ul>
      </div>
      <div class="lower">
        <div class="split"></div>
        <div class="bar">
          ${this.tool("bigCaret", "w16")}${this.tool("greenLayers", "w20")}<span class="w26 lead">${icon("dots")}</span>
          ${this.tool("listBars", "w26")}${this.tool("smallBars", "w18")}<span class="w8 sep gap"></span>
          ${this.tool("layersEye", "w24 pressed")}${this.tool("planeCube", "w24 pressed")}${this.tool("planeDash", "w24 pressed")}
          ${this.tool("chevrons", "w24")}${this.tool("layersDoc", "w20")}${this.tool("detailPage", "w24 gap")}
        </div>
        <div class="combo">
          <button aria-label="pick" disabled>${icon("cursorGrey")}</button>
          <div class="pickbox"><select aria-label="layer model" disabled><option>XZLT.PRT</option></select>${icon("arrowDown", "arrow")}</div>
        </div>
        <div class="layerbox">
          <ul class="layerlist">
            <li class="row root">${icon("layer")}<span class="name">层</span></li>
            ${layers.map(([t, i, n, c]) => row(t, i, n, c ?? ""))}
          </ul>
          <div class="scroll"><span class="end">${icon("arrowUp")}</span><span class="thumb"></span><span class="end">${icon("arrowDown")}</span></div>
        </div>
      </div>
    </aside>`;
  }

  private badge(x: number, y: number, kind: string, turn = 0) {
    const marks: Record<string, unknown> = {
      eq: line("M-4 -1.500H5M-4 1.500H5", "#666", 1.300),
      tee: line("M-4 -3.500H4M0 -3.500V5", "#444", 1.600),
      perp: line("M-4 3.500H4M0 3.500V-5", "#333", 1.600),
      co: svg`${line("M-6 0H6", "#555", 1.300)}<circle r="2.200" fill="#9fdcf0" stroke="#4b9dbb"/>`,
      ring: svg`<circle r="4.500" fill="none" stroke="#555"/><circle r="2" fill="#9fdcf0" stroke="#4b9dbb"/>`,
    };
    return svg`<g transform="translate(${x} ${y})"><circle cx=".7" cy=".9" r="8" fill="#8b8f93" opacity=".75"/>
      <circle r="7.700" fill="url(#ball)" stroke="#c3c6c9" stroke-width=".6"/><g transform="rotate(${turn})">${marks[kind]}</g></g>`;
  }

  private scene() {
    const idx = (x: number, y: number, t: string) => svg`<text class="idx" x=${x} y=${y}>${t}</text>`;
    const W = "M982.200 591.300L1280.100 494.500A626 626 0 0 1 1310.500 688H997.500A313 313 0 0 0 982.200 591.300z";
    return html`<svg class="scene" viewBox="285 170 1059 802" preserveAspectRatio="xMinYMin slice" role="img" aria-label="sketch">
      <defs><linearGradient id="ball" x1="0" y1="0" x2="1" y2="1"><stop offset="0" stop-color="#fff"/><stop offset="1" stop-color="#d9dce0"/></linearGradient></defs>
      <g shape-rendering="crispEdges">
        ${fill("M371.500 688a313 313 0 1 0 626 0a313 313 0 1 0 -626 0zM450 688a234.500 234.500 0 1 1 469 0a234.500 234.500 0 1 1 -469 0z", "#a0acbb")}
        <circle cx="684.500" cy="687.500" r="234.500" fill="none" stroke="#222"/>
        <circle cx="684.500" cy="687.500" r="313" fill="none" stroke="#222"/>
        <circle cx="684.500" cy="687.500" r="313" fill="none" stroke="#22e5e5" stroke-dasharray="7 6"/>
        <path d=${W} fill="#faeebf" stroke="#ff9900" stroke-width="2"/>
        ${line("M362.500 980V365.500H1006.500V980", "#996633")}
        ${line("M684.500 365V980", "#996633")}
        ${line("M684.500 170V365", "#22e5e5", 1, "8 6")}
        ${line("M684.500 365V980", "#22e5e5", 1, "8 7")}
        ${line("M586.500 170L739.500 980", "#0000e6")}
        ${line("M684.500 688L982 591.300", "#0000e6")}
        ${line("M285 818L684.500 688L982 591.300", "#ff80cc", 2, "7 3 3 3")}
        ${line("M1280 494.500L1344 473.700", "#ff80cc", 2, "7 4 3 4")}
        ${line("M285 688.500H1344", "#996633")}
        ${line("M919 688.500H972", "#0000e6")}
      </g>
      <g class="stroke" fill="#996633">
        <text x="361" y="366">FRONT</text><text x="361" y="366">DTM1</text>
        <text x="1006" y="688">TOP</text><text x="706" y="701">T_CSYS_DEF</text>
        <text x="685" y="652" fill="#33ff33">Y</text><text x="721" y="686" fill="#ff3333">X</text>
      </g>
      <text class="dim" x="666" y="693" fill="#0000e6">0.000</text>
      <g shape-rendering="crispEdges">
        ${line("M285 688H1344", "#990000", 4, "22 2 9 2 12 2 18 2 4 2")}
        <rect x="1085" y="677" width="58" height="9" fill="#fff"/>
        ${line("M971 688H1120", "#33cc4d", 2)}
        ${line("M1099.600 553A436.500 436.500 0 0 1 1121 688", "#0000e6")}
        ${fill("M1099 553L1100 565L1104 564z", "#33cc4d")}
        ${fill("M1118 676H1123L1121 688z", "#0000e6")}
        ${fill("M1110 663H1118L1115 687H1113zM1110 712H1118L1115 689H1113z", "#33cc4d")}
        <rect x="1081" y="604" width="67" height="22" fill="#fff"/>
        ${line("M684.500 676V698", "#ff9900", 2)}
        <rect x="981" y="590" width="3" height="3" fill="#1c9bc4"/><rect x="1279" y="493" width="3" height="3" fill="#1c9bc4"/>
      </g>
      <text class="dim" x="1114" y="621" text-anchor="middle" fill="#0000e6">18.000</text>
      <text class="dim" x="1114" y="694" text-anchor="middle" fill="#33cc4d">0.000</text>
      ${this.badge(411, 574, "eq")}${this.badge(389, 687.500, "tee")}${this.badge(411, 800, "perp")}
      ${this.badge(975, 641, "eq")}${this.badge(997, 669.5, "co")}${this.badge(685, 670, "co", -20)}${this.badge(680, 671, "co", -10)}
      ${this.badge(684.5, 705.500, "ring")}${this.badge(1136.500, 560, "tee", -17)}${this.badge(1154, 669.500, "perp")}${this.badge(1274.500, 478, "co", -18)}
      ${idx(421, 568, "1")}${idx(399, 681, "1")}${idx(421, 793, "2")}${idx(985, 634, "1")}${idx(1146, 553, "1")}${idx(1164, 663, "2")}
      <text class="note" x="1080" y="737">角度20改为0后的效果</text>
    </svg>`;
  }

  render() {
    const view = ["zoomFit", "zoomIn", "zoomOut", "repaint", "shade", "saved", "camera", "datumShow", "camSwap", "section", "persp", "dimEye", "sketchEye", "noteEye", "spin"];
    return html`${this.titleBar()}${this.tabBar()}${this.ribbon()}
      <div class="main">
        ${this.sidebar()}
        <main class="canvas">
          ${this.scene()}
          <div class="float"><div class="floatbar" role="toolbar">
            ${view.map((n, i) => this.tool(n, i > 12 ? "pressed" : ""))}
          </div></div>
          <div class="logo">
            <span class="word"><span class="fire">野火</span>论坛</span>
            <svg class="flame" viewBox="0 0 24 44" aria-hidden="true"><path d="M9 0Q18 7 14 20Q12 28 5 36L11 43Q23 33 22 22Q21 12 16 8Q14 4 9 0z" fill="#ff6633"/></svg>
            <span class="site">www.proewildfire.cn</span>
          </div>
        </main>
      </div>`;
  }
}
